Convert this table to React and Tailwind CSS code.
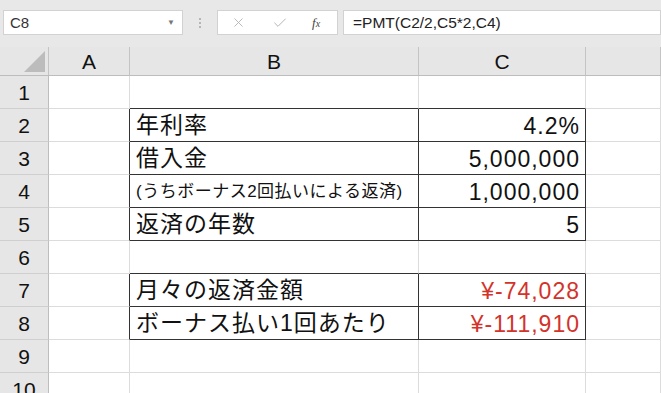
import { X, Check } from "lucide-react";

const rows = [
  { n: 1, edge: true },
  { n: 2, label: "年利率", value: "4.2%", box: true },
  { n: 3, label: "借入金", value: "5,000,000", box: true },
  { n: 4, label: "(うちボーナス2回払いによる返済)", value: "1,000,000", box: true, small: true },
  { n: 5, label: "返済の年数", value: "5", box: true },
  { n: 6, edge: true },
  { n: 7, label: "月々の返済金額", value: "¥-74,028", box: true, red: true },
  { n: 8, label: "ボーナス払い1回あたり", value: "¥-111,910", box: true, red: true },
  { n: 9 },
  { n: 10 },
];

const font = { fontFamily: '"Liberation Sans", "Noto Sans CJK JP", sans-serif' };

// B / C cell border variants, written out in full
function cellBorder(r) {
  if (r.box) return "border-b border-r border-[#333333]";
  if (r.edge) return "border-b border-r border-b-[#333333] border-r-[#dcdcdc]";
  return "border-b border-r border-[#dcdcdc]";
}

function FormulaBar() {
  return (
    <div className="flex h-[47px] items-start pl-[3px] pt-[10px]">
      <div className="flex h-[25px] w-[180px] items-center justify-between border border-[#d2d2d2] bg-white pl-[6px] pr-[7px]">
        <span className="text-[15px] leading-none text-[#333]">C8</span>
        <span className="text-[8px] leading-none text-[#777]">▼</span>
      </div>
      <div className="flex h-[25px] w-[34px] flex-col items-center justify-center gap-[2px]">
        <span className="h-[2px] w-[2px] bg-[#b5b5b5]" />
        <span className="h-[2px] w-[2px] bg-[#b5b5b5]" />
        <span className="h-[2px] w-[2px] bg-[#b5b5b5]" />
      </div>
      <div className="flex h-[25px] w-[121px] items-center border border-[#d2d2d2] bg-white">
        <X size={15} strokeWidth={1.5} className="ml-[13px] text-[#b5b5b5]" />
        <Check size={16} strokeWidth={1.5} className="ml-[26px] text-[#b5b5b5]" />
        <span
          className="ml-[24px] text-[13px] leading-none italic text-[#444]"
          style={{ fontFamily: '"Liberation Serif", serif' }}
        >
          f<span className="text-[10px]">x</span>
        </span>
      </div>
      <div className="ml-[5px] flex h-[25px] flex-1 items-center border border-[#d2d2d2] bg-white pl-[9px]">
        <span className="text-[15.5px] leading-none text-[#222]">=PMT(C2/2,C5*2,C4)</span>
      </div>
    </div>
  );
}

function HeaderRow() {
  return (
    <div className="grid h-[29px] grid-cols-[49px_81px_289px_167px_1fr] grid-rows-[28px] border-b border-[#bdbdbd] bg-[#e6e6e6]">
      <div className="flex items-end justify-end border-r border-[#c4c4c4] pb-[3px] pr-[3px]">
        <svg width="21" height="21" viewBox="0 0 21 21">
          <polygon points="21,0 21,21 0,21" fill="#bcbcbc" />
        </svg>
      </div>
      {["A", "B", "C", ""].map((c, i) => (
        <div
          key={i}
          className="flex items-center justify-center border-r border-[#c4c4c4] text-[21px] leading-none text-[#111]"
        >
          {c}
        </div>
      ))}
    </div>
  );
}

function Row({ r }) {
  const aBorder = r.box
    ? "border-b border-r border-b-[#dcdcdc] border-r-[#333333]"
    : "border-b border-r border-[#dcdcdc]";
  const bc = cellBorder(r);
  const labelSize = r.small ? "text-[17px] tracking-[0.5px]" : "text-[23px] tracking-[1px]";
  const valueColor = r.red ? "text-[#d3332a]" : "text-[#111]";

  return (
    <div className="grid h-[33px] grid-cols-[49px_81px_289px_167px_1fr] grid-rows-[33px]">
      <div className="flex items-center justify-center border-b border-r border-b-[#cfcfcf] border-r-[#bdbdbd] bg-[#e6e6e6] text-[21px] leading-none text-[#111]">
        {r.n}
      </div>
      <div className={`bg-white ${aBorder}`} />
      <div
        className={`flex items-center overflow-hidden whitespace-nowrap bg-white pl-[6px] leading-none text-[#111] ${bc} ${labelSize}`}
      >
        {r.label}
      </div>
      <div
        className={`flex items-center justify-end bg-white pr-[5px] pt-[3px] text-[23px] leading-none tracking-[1px] ${bc} ${valueColor}`}
      >
        {r.value}
      </div>
      <div className="border-b border-r border-[#dcdcdc] bg-white" />
    </div>
  );
}

export default function App() {
  return (
    <div className="h-[393px] w-[661px] overflow-hidden bg-[#e8e8e8]" style={font}>
      <FormulaBar />
      <HeaderRow />
      {rows.map((r) => (
        <Row key={r.n} r={r} />
      ))}
    </div>
  );
}
